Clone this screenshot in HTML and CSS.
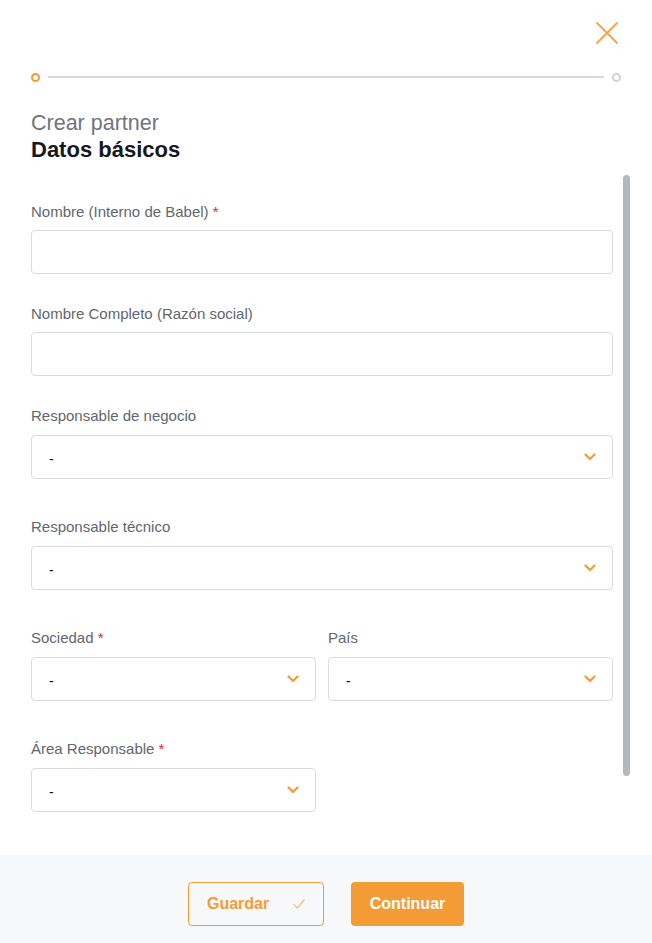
FILE: index.html
```html
<!DOCTYPE html>
<html lang="es">
<head>
<meta charset="utf-8">
<title>Crear partner</title>
<link rel="stylesheet" href="styles.css">
</head>
<body>
<div class="modal">
  <div class="top">
    <button class="close" aria-label="Cerrar">
      <svg width="24" height="24" viewBox="0 0 24 24"><path d="M2 2 L22 22 M22 2 L2 22" stroke="#f5a344" stroke-width="1.8" fill="none" stroke-linecap="round"/></svg>
    </button>
  </div>
  <div class="stepper">
    <span class="dot active"></span>
    <span class="line"></span>
    <span class="dot"></span>
  </div>
  <div class="titles">
    <div class="subtitle">Crear partner</div>
    <h1 class="title">Datos básicos</h1>
  </div>
  <div class="body">
    <form class="form">
      <div class="field text">
        <label class="label">Nombre (Interno de Babel) <span class="req">*</span></label>
        <div class="input"></div>
      </div>
      <div class="field text">
        <label class="label">Nombre Completo (Razón social)</label>
        <div class="input"></div>
      </div>
      <div class="field sel">
        <label class="label">Responsable de negocio</label>
        <div class="input select"><span>-</span><svg class="chev" width="12" height="8" viewBox="0 0 12 8"><path d="M1.5 1.5 L6 6 L10.5 1.5" stroke="#f39c36" stroke-width="2.2" fill="none" stroke-linecap="round" stroke-linejoin="round"/></svg></div>
      </div>
      <div class="field sel">
        <label class="label">Responsable técnico</label>
        <div class="input select"><span>-</span><svg class="chev" width="12" height="8" viewBox="0 0 12 8"><path d="M1.5 1.5 L6 6 L10.5 1.5" stroke="#f39c36" stroke-width="2.2" fill="none" stroke-linecap="round" stroke-linejoin="round"/></svg></div>
      </div>
      <div class="row">
        <div class="field sel">
          <label class="label">Sociedad <span class="req">*</span></label>
          <div class="input select"><span>-</span><svg class="chev" width="12" height="8" viewBox="0 0 12 8"><path d="M1.5 1.5 L6 6 L10.5 1.5" stroke="#f39c36" stroke-width="2.2" fill="none" stroke-linecap="round" stroke-linejoin="round"/></svg></div>
        </div>
        <div class="field sel">
          <label class="label">País</label>
          <div class="input select"><span>-</span><svg class="chev" width="12" height="8" viewBox="0 0 12 8"><path d="M1.5 1.5 L6 6 L10.5 1.5" stroke="#f39c36" stroke-width="2.2" fill="none" stroke-linecap="round" stroke-linejoin="round"/></svg></div>
        </div>
      </div>
      <div class="row">
        <div class="field sel">
          <label class="label">Área Responsable <span class="req">*</span></label>
          <div class="input select"><span>-</span><svg class="chev" width="12" height="8" viewBox="0 0 12 8"><path d="M1.5 1.5 L6 6 L10.5 1.5" stroke="#f39c36" stroke-width="2.2" fill="none" stroke-linecap="round" stroke-linejoin="round"/></svg></div>
        </div>
        <div></div>
      </div>
    </form>
    <div class="rail"><div class="thumb"></div></div>
  </div>
  <div class="footer">
    <button class="btn outline">Guardar <svg class="check" width="12" height="10" viewBox="0 0 12 10"><path d="M1 5.5 L4.5 9 L11 1" stroke="#f7c58c" stroke-width="1.6" fill="none" stroke-linecap="round" stroke-linejoin="round"/></svg></button>
    <button class="btn primary">Continuar</button>
  </div>
</div>
</body>
</html>
```

FILE: styles.css
```css
* { box-sizing: border-box; }
html, body { margin: 0; padding: 0; background: #fff; }
body { font-family: "Liberation Sans", Arial, sans-serif; color: #1f2328; }

.modal {
  width: 652px;
  height: 943px;
  display: flex;
  flex-direction: column;
  overflow: hidden;
}

.top {
  display: flex;
  justify-content: flex-end;
  padding: 21px 33px 0 0;
  height: 72px;
}
.close {
  width: 24px;
  height: 24px;
  padding: 0;
  border: 0;
  background: none;
  cursor: pointer;
}

.stepper {
  display: flex;
  align-items: center;
  height: 10px;
  padding: 0 31px 0 31px;
}
.dot {
  width: 9px;
  height: 9px;
  border-radius: 50%;
  border: 2px solid #cfd4da;
  flex: none;
}
.dot.active { border-color: #f39c36; }
.line {
  flex: 1;
  height: 2px;
  background: #d5d9df;
  margin: 0 8px;
}

.titles {
  padding: 29px 31px 0;
}
.subtitle {
  font-size: 21.5px;
  line-height: 24px;
  color: #6f757c;
}
.title {
  margin: 2px 0 0;
  font-size: 22px;
  line-height: 26px;
  font-weight: 700;
  color: #15181c;
}

.body {
  flex: 1;
  display: flex;
  padding-top: 8px;
  min-height: 0;
}
.form {
  width: 582px;
  margin-left: 31px;
  padding-top: 32px;
}
.rail {
  width: 7px;
  margin-left: 10px;
  padding-top: 4px;
}
.thumb {
  width: 7px;
  height: 601px;
  border-radius: 4px;
  background: #b1b8bf;
}

.field { display: flex; flex-direction: column; }
.field.text { margin-bottom: 31px; }
.field.sel { margin-bottom: 39px; }
.row {
  display: grid;
  grid-template-columns: 285px 285px;
  column-gap: 12px;
}
.label {
  font-size: 15px;
  line-height: 17px;
  color: #62676d;
  margin-bottom: 10px;
}
.field.sel .label { margin-bottom: 11px; }
.req { color: #e0262d; }
.input {
  height: 44px;
  border: 1px solid #d8dbe0;
  border-radius: 4px;
  background: #fff;
}
.select {
  display: flex;
  align-items: center;
  justify-content: space-between;
  padding: 3px 16px 0 17px;
  font-size: 14px;
  color: #111;
}
.chev { margin-top: -4px; }

.footer {
  height: 88px;
  background: #f7f8fa;
  display: flex;
  justify-content: center;
  align-items: flex-start;
  padding-top: 27px;
  gap: 27px;
}
.btn {
  height: 44px;
  border-radius: 4px;
  font-family: "Liberation Sans", Arial, sans-serif;
  font-size: 16px;
  font-weight: 700;
  cursor: pointer;
  display: flex;
  align-items: center;
}
.btn.outline {
  width: 136px;
  border: 1px solid #f39c36;
  background: transparent;
  color: #f39c36;
  padding: 0 0 0 18px;
}
.check { margin-left: 24px; }
.btn.primary {
  width: 113px;
  border: 0;
  background: #f39c36;
  color: #fff;
  justify-content: center;
}
```
